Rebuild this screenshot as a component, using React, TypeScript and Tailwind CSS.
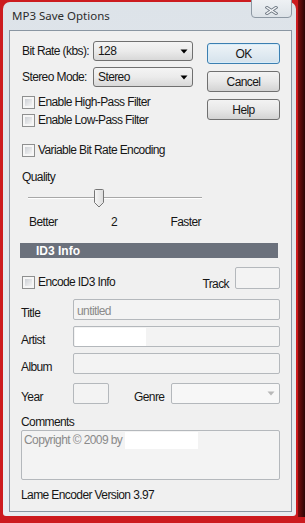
import React from "react";

const Checkbox = () => (
  <span className="w-[13px] h-[13px] border border-[#8e8f8f] bg-[#f6f6f6] p-[2px] flex shrink-0">
    <span className="flex-1 bg-linear-to-br from-[#cdd0d5] to-[#f5f5f5]" />
  </span>
);

const CheckRow = ({ label, className = "" }: { label: string; className?: string }) => (
  <div className={`h-[14px] flex items-center gap-[3px] pl-[1px] ${className}`}>
    <Checkbox />
    <span>{label}</span>
  </div>
);

const Arrow = ({ color = "#000" }: { color?: string }) => (
  <svg width="8" height="5" viewBox="0 0 8 5" className="shrink-0">
    <path d="M0.5 0.5 H7.5 L4 4.5 Z" fill={color} />
  </svg>
);

const Select = ({ value }: { value: string }) => (
  <div className="flex-1 h-full border border-[#707070] rounded-[3px] bg-linear-to-b from-[#f4f4f4] via-[#ebebeb] to-[#d8d8d8] flex items-center pl-[4px] pr-[4px]">
    <span>{value}</span>
    <span className="ml-auto">
      <Arrow />
    </span>
  </div>
);

const Button = ({ label, primary = false }: { label: string; primary?: boolean }) => (
  <div
    className={
      primary
        ? "h-[21px] border border-[#3c7fb1] rounded-[3px] bg-linear-to-b from-[#eef4f8] to-[#d5e2ec] flex items-center justify-center shadow-[inset_0_0_0_1px_#d8ecf8]"
        : "h-[21px] border border-[#707070] rounded-[3px] bg-linear-to-b from-[#f3f3f3] via-[#e8e8e8] to-[#d3d3d3] flex items-center justify-center"
    }
  >
    {label}
  </div>
);

const Field = ({ label, children }: { label: string; children?: React.ReactNode }) => (
  <div className="flex items-end">
    <span className="w-[52px] leading-[14px]">{label}</span>
    <div className="flex-1 h-[21px] border border-[#b4b8bc] rounded-[2px] bg-[#f3f3f3] flex items-start pt-[1px] pl-[1px]">
      {children}
    </div>
  </div>
);

export default function App() {
  return (
    <div className="w-[305px] h-[523px] bg-[#cc1b1f] flex font-['Liberation_Sans',Arial,sans-serif] text-[12px] tracking-[-0.6px] text-[#161616] overflow-hidden">
      <div className="pl-[3px] pt-[2px]">
        {/* Window */}
        <div className="relative w-[293px] h-[514px] bg-linear-to-b from-[#dde3e9] to-[#e9edf1] rounded-t-[7px] rounded-b-[3px] flex flex-col pl-[6px] pr-[4px] pb-[4px] pt-[28px]">
          <div className="absolute left-[9px] top-[5px] text-[11.5px] tracking-normal text-[#2c2c2c] font-['Noto_Sans',sans-serif]">
            MP3 Save Options
          </div>
          <div className="absolute left-[248px] top-[-3px] w-[41px] h-[19px] border border-[#8d98a3] rounded-b-[4px] bg-linear-to-b from-[#eef1f4] to-[#dde3e8] flex items-center justify-center pt-[3px]">
            <svg width="13" height="9" viewBox="0 0 13 9">
              <path d="M2 1.5 L11 7.5 M11 1.5 L2 7.5" stroke="#6d7782" strokeWidth="3.2" strokeLinecap="square" />
              <path d="M2 1.5 L11 7.5 M11 1.5 L2 7.5" stroke="#f4f6f8" strokeWidth="1.4" strokeLinecap="square" />
            </svg>
          </div>

          {/* Client area */}
          <div className="flex-1 border border-[#8a96a2] bg-[#f0f0f0] flex flex-col pl-[11px] pr-[11px]">
            <div className="mt-[10px] flex justify-between">
              <div className="w-[172px] flex flex-col">
                <div className="h-[20px] flex items-center">
                  <span className="w-[72px] pl-[1px]">Bit Rate (kbs):</span>
                  <Select value="128" />
                </div>
                <div className="mt-[6px] h-[20px] flex items-center">
                  <span className="w-[72px] pl-[1px]">Stereo Mode:</span>
                  <Select value="Stereo" />
                </div>
                <CheckRow label="Enable High-Pass Filter" className="mt-[8px]" />
                <CheckRow label="Enable Low-Pass Filter" className="mt-[4px]" />
              </div>
              <div className="w-[73px] flex flex-col gap-[7px] pt-[2px]">
                <Button label="OK" primary />
                <Button label="Cancel" />
                <Button label="Help" />
              </div>
            </div>

            <CheckRow label="Variable Bit Rate Encoding" className="mt-[16px]" />

            <div className="mt-[13px] h-[14px] flex items-center pl-[1px]">Quality</div>

            {/* Slider */}
            <div className="mt-[5px] h-[19px] ml-[7px] w-[174px] relative">
              <div className="absolute left-0 right-0 top-[8px] h-[2px] border-t border-[#a8a8a8] border-b border-b-[#ffffff]" />
              <svg width="12" height="19" viewBox="0 0 12 19" className="absolute left-[65px] top-0">
                <defs>
                  <linearGradient id="thumb" x1="0" y1="0" x2="1" y2="0">
                    <stop offset="0" stopColor="#f7f7f7" />
                    <stop offset="1" stopColor="#dcdcdc" />
                  </linearGradient>
                </defs>
                <path d="M1.5 1.5 Q1.5 0.5 2.5 0.5 H9.5 Q10.5 0.5 10.5 1.5 V13.5 L6 18 L1.5 13.5 Z" fill="url(#thumb)" stroke="#767676" />
              </svg>
            </div>

            <div className="mt-[7px] h-[14px] ml-[8px] w-[172px] flex items-center justify-between">
              <span>Better</span>
              <span>2</span>
              <span>Faster</span>
            </div>

            <div className="mt-[14px] h-[15px] -ml-[1px] mr-[2px] bg-[#6b717c] flex items-center pl-[16px] text-white font-bold text-[12px] tracking-normal">
              ID3 Info
            </div>

            <div className="mt-[9px] h-[22px] flex items-start">
              <CheckRow label="Encode ID3 Info" className="mt-[8px]" />
              <span className="ml-auto mt-[10px] leading-[14px]">Track</span>
              <div className="ml-[6px] w-[45px] h-[22px] border border-[#b4b8bc] rounded-[2px] bg-[#f3f3f3]" />
            </div>

            <div className="mt-[10px] flex flex-col gap-[6px]">
              <Field label="Title">
                <span className="pl-[2px] pt-[1px] text-[#8a8a8a]">untitled</span>
              </Field>
              <Field label="Artist">
                <span className="w-[71px] h-[18px] bg-white" />
              </Field>
              <Field label="Album" />
            </div>

            <div className="mt-[9px] flex items-end">
              <span className="w-[52px] leading-[14px]">Year</span>
              <div className="w-[36px] h-[21px] border border-[#b4b8bc] rounded-[2px] bg-[#f3f3f3]" />
              <span className="ml-[25px] leading-[14px]">Genre</span>
              <div className="ml-auto w-[109px] h-[21px] border border-[#b4b8bc] rounded-[2px] bg-[#f7f7f7] flex items-center justify-end pr-[4px]">
                <Arrow color="#b8b8b8" />
              </div>
            </div>

            <div className="mt-[11px] h-[14px] flex items-center">Comments</div>
            <div className="mt-[1px] h-[50px] border border-[#b4b8bc] rounded-[2px] bg-[#f3f3f3] flex items-start pt-[1px] pl-[2px]">
              <span className="text-[#8a8a8a] leading-[17px]">Copyright © 2009 by</span>
              <span className="ml-[3px] w-[73px] h-[17px] bg-white" />
            </div>

            <div className="mt-[8px] h-[14px] flex items-center">Lame Encoder Version 3.97</div>
          </div>
        </div>
      </div>
      <div className="ml-auto w-[7px] h-[517px] bg-linear-to-r from-[#7a0d0e] to-[#2c0505]" />
    </div>
  );
}
